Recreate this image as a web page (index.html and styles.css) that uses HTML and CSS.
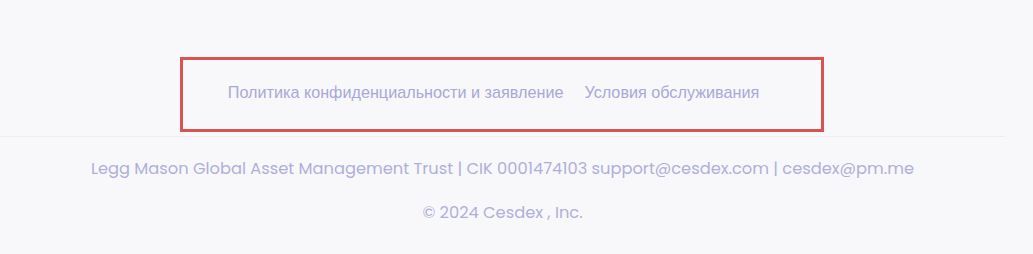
FILE: index.html
```html
<!DOCTYPE html>
<html lang="ru">
<head>
<meta charset="utf-8">
<link rel="stylesheet" href="styles.css">
</head>
<body>
<div class="page">
  <div class="links-wrap">
    <nav class="links">
      <a href="#">Политика конфиденциальности и заявление</a>
      <a href="#">Условия обслуживания</a>
    </nav>
    <div class="highlight"></div>
  </div>
  <footer class="footer">
    <p class="info">Legg Mason Global Asset Management Trust | CIK 0001474103 support@cesdex.com | cesdex@pm.me</p>
    <p class="copy">© 2024 Cesdex , Inc.</p>
  </footer>
</div>
</body>
</html>
```
FILE: styles.css
```css
html, body {
  margin: 0;
  padding: 0;
  background: #f8f8fa;
}
.page {
  width: 1005px;
  height: 254px;
}
.links-wrap {
  position: relative;
  height: 136px;
  border-bottom: 1px solid #ececf1;
}
.links {
  display: flex;
  justify-content: center;
  gap: 21px;
  padding-top: 82px;
  padding-right: 18px;
  font-family: "Liberation Sans", Arial, sans-serif;
  font-size: 16.2px;
  line-height: 20px;
}
.links a {
  color: #a8a8d8;
  text-decoration: none;
}
.highlight {
  position: absolute;
  left: 180px;
  top: 57px;
  width: 638px;
  height: 69px;
  border: 3px solid #d9534f;
}
.footer {
  text-align: center;
  font-family: "Poppins", "Inter", "Noto Sans", sans-serif;
  color: #afafda;
  font-size: 16.25px;
}
.info {
  margin: 0;
  padding-top: 21px;
  line-height: 22px;
}
.copy {
  margin: 0;
  padding-top: 22px;
  line-height: 22px;
}
```
